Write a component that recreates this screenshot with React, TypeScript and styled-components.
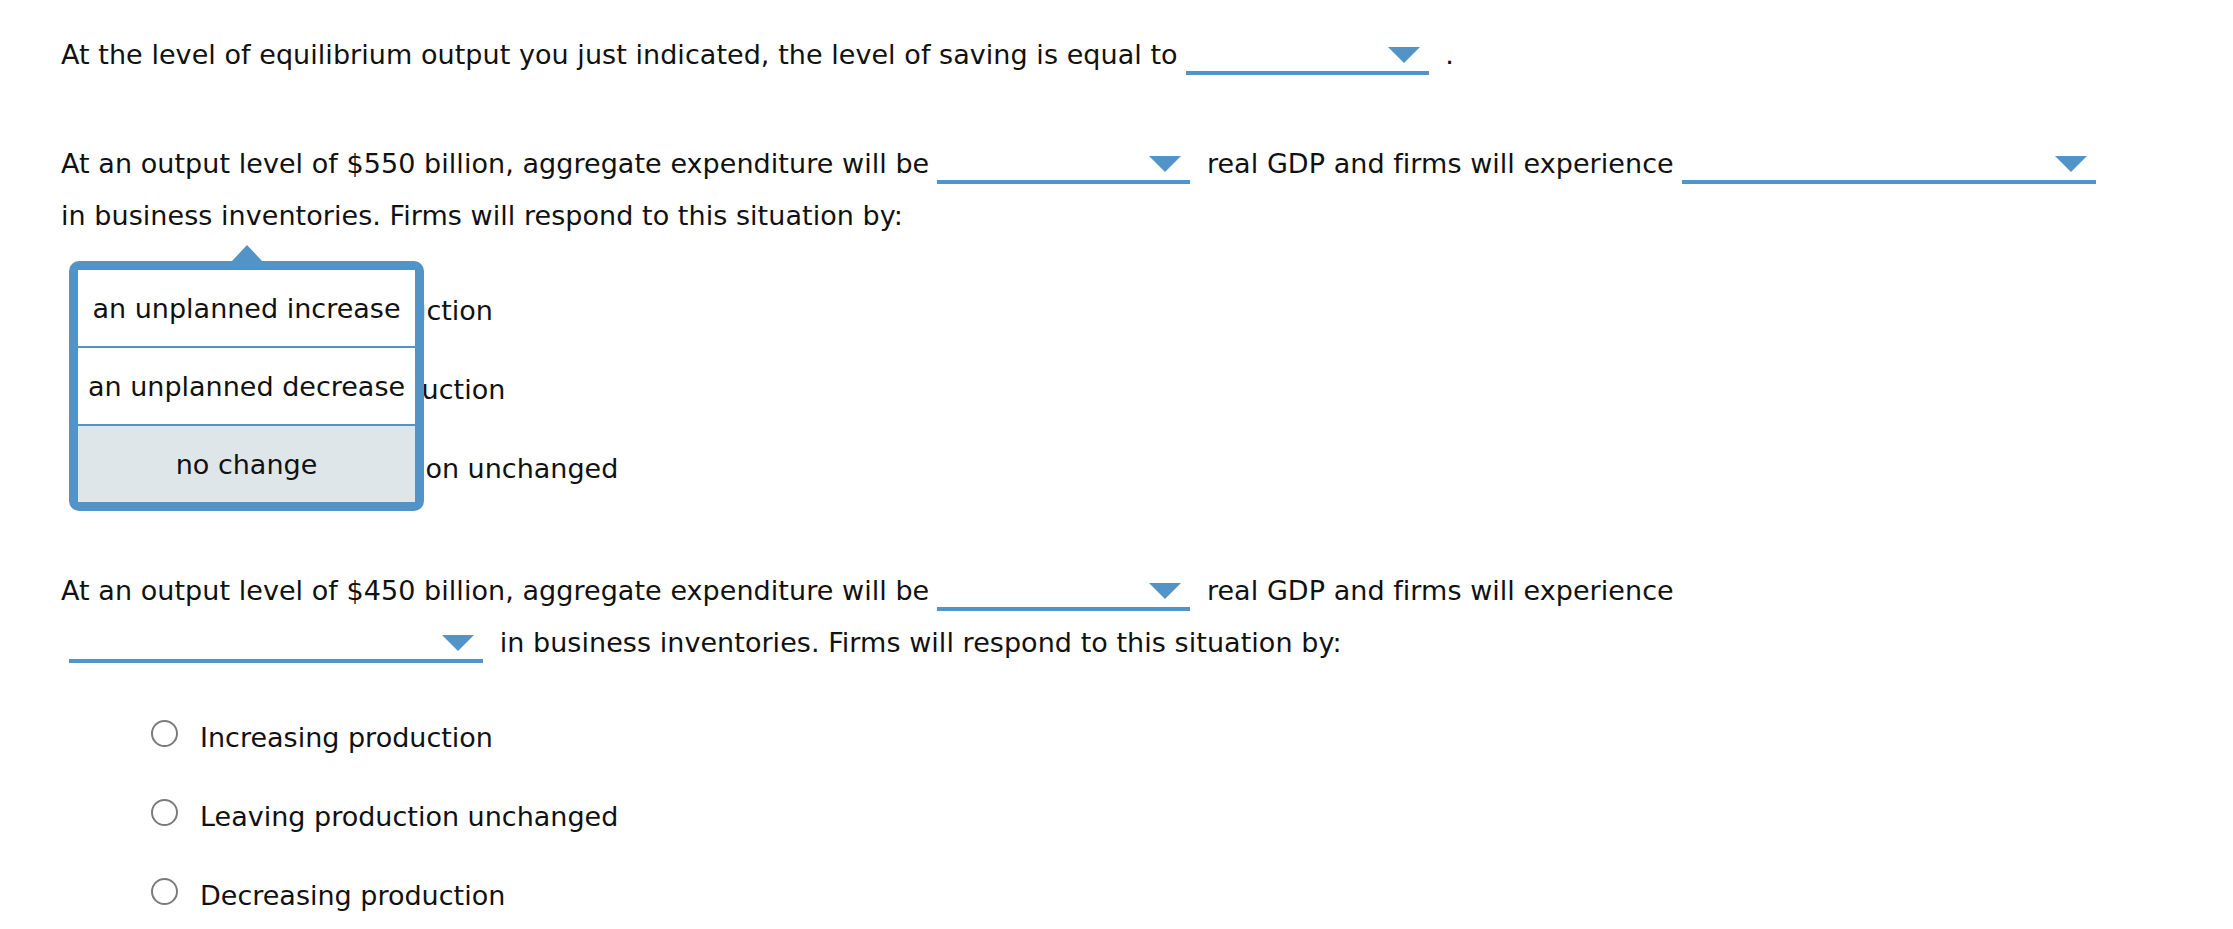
import styled, { createGlobalStyle } from "styled-components";

const GlobalStyle = createGlobalStyle`
  body {
    margin: 0;
    background: #ffffff;
    color: #111111;
    font-family: "DejaVu Sans", Verdana, sans-serif;
  }
`;

const Page = styled.main`
  display: flex;
  flex-direction: column;
  gap: 57px;
  padding: 29px 0 0 61px;
`;

const Question = styled.section`
  position: relative;
`;

const Prompt = styled.p<{ $maxWidth?: number }>`
  margin: 0;
  font-size: 27px;
  line-height: 52px;
  letter-spacing: 0.05px;
  max-width: ${(props) => (props.$maxWidth ? `${props.$maxWidth}px` : "none")};
`;

const Select = styled.span<{ $width: number }>`
  display: inline-block;
  vertical-align: -11px;
  width: ${(props) => props.$width}px;
  height: 28px;
  margin: 0 8px;
  padding-right: 9px;
  box-sizing: border-box;
  border-bottom: 4px solid #5394c8;
  svg {
    display: block;
    margin-left: auto;
  }
`;

const Choices = styled.ul`
  display: flex;
  flex-direction: column;
  gap: 29px;
  margin: 44px 0 14px;
  padding: 0 0 0 90px;
  list-style: none;
`;

const Choice = styled.li`
  display: flex;
  align-items: flex-start;
  gap: 22px;
  font-size: 27px;
  line-height: 50px;
`;

const Radio = styled.span`
  flex: none;
  width: 27px;
  height: 27px;
  margin-top: 7px;
  box-sizing: border-box;
  border: 2px solid #7b7b7b;
  border-radius: 50%;
  background: #fff;
`;

const Menu = styled.ul`
  position: absolute;
  top: 123px;
  left: 8px;
  width: 355px;
  margin: 0;
  padding: 0;
  box-sizing: border-box;
  list-style: none;
  background: #fff;
  border: 9px solid #5394c8;
  border-radius: 10px;
  &::before {
    content: "";
    position: absolute;
    top: -25px;
    left: 50%;
    transform: translateX(-50%);
    border-left: 15px solid transparent;
    border-right: 15px solid transparent;
    border-bottom: 16px solid #5394c8;
  }
`;

const MenuItem = styled.li<{ $active?: boolean }>`
  display: flex;
  align-items: center;
  justify-content: center;
  height: 76px;
  font-size: 27px;
  white-space: nowrap;
  background: ${(props) => (props.$active ? "#dfe6ea" : "#fff")};
  & + & {
    border-top: 2px solid #5394c8;
  }
`;

function Dropdown({ width }: { width: number }) {
  return (
    <Select $width={width}>
      <svg width="32" height="16" viewBox="0 0 32 16">
        <polygon points="0,0 32,0 16,16" fill="#5394c8" />
      </svg>
    </Select>
  );
}

function RadioList({ options }: { options: string[] }) {
  return (
    <Choices>
      {options.map((o) => (
        <Choice key={o}>
          <Radio />
          {o}
        </Choice>
      ))}
    </Choices>
  );
}

const inventoryOptions = [
  "an unplanned increase",
  "an unplanned decrease",
  "no change",
];

function App() {
  return (
    <>
      <GlobalStyle />
      <Page>
        <Question>
          <Prompt>
            At the level of equilibrium output you just indicated, the level of
            saving is equal to
            <Dropdown width={243} /> .
          </Prompt>
        </Question>

        <Question>
          <Prompt $maxWidth={2060}>
            At an output level of $550 billion, aggregate expenditure will be
            <Dropdown width={253} /> real GDP and firms will experience
            <Dropdown width={414} /> in business inventories. Firms will respond
            to this situation by:
          </Prompt>
          <RadioList
            options={[
              "Increasing production",
              "Decreasing production",
              "Leaving production unchanged",
            ]}
          />
          <Menu>
            {inventoryOptions.map((o) => (
              <MenuItem key={o} $active={o === "no change"}>
                {o}
              </MenuItem>
            ))}
          </Menu>
        </Question>

        <Question>
          <Prompt $maxWidth={1900}>
            At an output level of $450 billion, aggregate expenditure will be
            <Dropdown width={253} /> real GDP and firms will experience
            <Dropdown width={414} /> in business inventories. Firms will respond
            to this situation by:
          </Prompt>
          <RadioList
            options={[
              "Increasing production",
              "Leaving production unchanged",
              "Decreasing production",
            ]}
          />
        </Question>
      </Page>
    </>
  );
}

export default App;
